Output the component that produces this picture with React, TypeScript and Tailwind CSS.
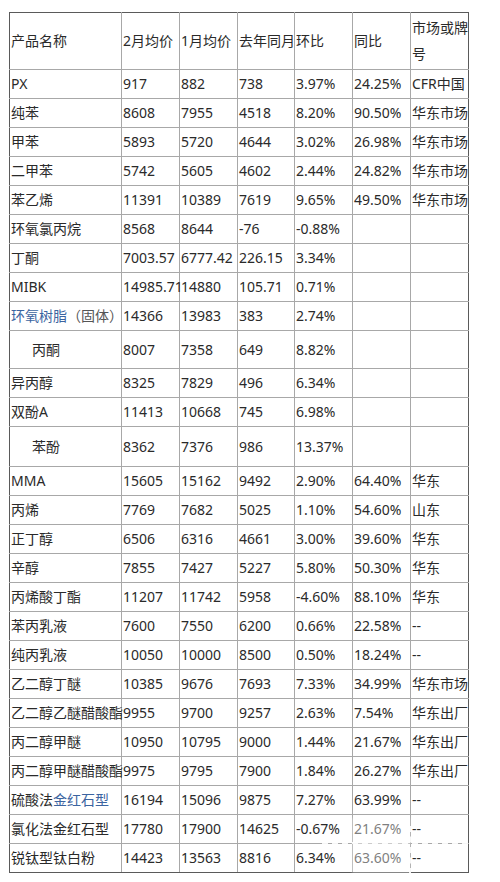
import React from 'react';

type Row = {
  name: React.ReactNode;
  feb: string;
  jan: string;
  last: string;
  mom: string;
  yoy?: string;
  market?: string;
  indent?: boolean;
  h?: string;
};

const blue = 'text-[#3b64a0]';

const rows: Row[] = [
  { name: 'PX', feb: '917', jan: '882', last: '738', mom: '3.97%', yoy: '24.25%', market: 'CFR中国' },
  { name: '纯苯', feb: '8608', jan: '7955', last: '4518', mom: '8.20%', yoy: '90.50%', market: '华东市场' },
  { name: '甲苯', feb: '5893', jan: '5720', last: '4644', mom: '3.02%', yoy: '26.98%', market: '华东市场' },
  { name: '二甲苯', feb: '5742', jan: '5605', last: '4602', mom: '2.44%', yoy: '24.82%', market: '华东市场' },
  { name: '苯乙烯', feb: '11391', jan: '10389', last: '7619', mom: '9.65%', yoy: '49.50%', market: '华东市场' },
  { name: '环氧氯丙烷', feb: '8568', jan: '8644', last: '-76', mom: '-0.88%' },
  { name: '丁酮', feb: '7003.57', jan: '6777.42', last: '226.15', mom: '3.34%' },
  { name: 'MIBK', feb: '14985.71', jan: '14880', last: '105.71', mom: '0.71%' },
  {
    name: (
      <>
        <span className={blue}>环氧树脂</span>
        <span className="text-[#555]">（固体）</span>
      </>
    ),
    feb: '14366', jan: '13983', last: '383', mom: '2.74%',
  },
  { name: '丙酮', feb: '8007', jan: '7358', last: '649', mom: '8.82%', indent: true, h: 'h-[38px]' },
  { name: '异丙醇', feb: '8325', jan: '7829', last: '496', mom: '6.34%' },
  { name: '双酚A', feb: '11413', jan: '10668', last: '745', mom: '6.98%' },
  { name: '苯酚', feb: '8362', jan: '7376', last: '986', mom: '13.37%', indent: true, h: 'h-[40px]' },
  { name: 'MMA', feb: '15605', jan: '15162', last: '9492', mom: '2.90%', yoy: '64.40%', market: '华东' },
  { name: '丙烯', feb: '7769', jan: '7682', last: '5025', mom: '1.10%', yoy: '54.60%', market: '山东' },
  { name: '正丁醇', feb: '6506', jan: '6316', last: '4661', mom: '3.00%', yoy: '39.60%', market: '华东' },
  { name: '辛醇', feb: '7855', jan: '7427', last: '5227', mom: '5.80%', yoy: '50.30%', market: '华东' },
  { name: '丙烯酸丁酯', feb: '11207', jan: '11742', last: '5958', mom: '-4.60%', yoy: '88.10%', market: '华东' },
  { name: '苯丙乳液', feb: '7600', jan: '7550', last: '6200', mom: '0.66%', yoy: '22.58%', market: '--' },
  { name: '纯丙乳液', feb: '10050', jan: '10000', last: '8500', mom: '0.50%', yoy: '18.24%', market: '--' },
  { name: '乙二醇丁醚', feb: '10385', jan: '9676', last: '7693', mom: '7.33%', yoy: '34.99%', market: '华东市场' },
  { name: '乙二醇乙醚醋酸酯', feb: '9955', jan: '9700', last: '9257', mom: '2.63%', yoy: '7.54%', market: '华东出厂' },
  { name: '丙二醇甲醚', feb: '10950', jan: '10795', last: '9000', mom: '1.44%', yoy: '21.67%', market: '华东出厂' },
  { name: '丙二醇甲醚醋酸酯', feb: '9975', jan: '9795', last: '7900', mom: '1.84%', yoy: '26.27%', market: '华东出厂' },
  {
    name: (
      <>
        硫酸法<span className={blue}>金红石型</span>
      </>
    ),
    feb: '16194', jan: '15096', last: '9875', mom: '7.27%', yoy: '63.99%', market: '--',
  },
  { name: '氯化法金红石型', feb: '17780', jan: '17900', last: '14625', mom: '-0.67%', yoy: '21.67%', market: '--' },
  { name: '锐钛型钛白粉', feb: '14423', jan: '13563', last: '8816', mom: '6.34%', yoy: '63.60%', market: '--' },
];

const cell =
  'border border-[#a8a8a8] px-[1px] align-middle whitespace-nowrap overflow-visible first:border-l-[#5a5a5a] last:border-r-[#5a5a5a]';

export default function App() {
  return (
    <div
      className="relative w-[500px] h-[882px] bg-white text-[14px] leading-[26px] text-[#2a2a2a]"
      style={{ fontFamily: '"Noto Sans", "Noto Sans CJK SC", sans-serif' }}
    >
      <div className="pt-[12px] pl-[9px]">
        <table className="table-fixed border-collapse w-[459px]">
          <colgroup>
            <col className="w-[112px]" />
            <col className="w-[58px]" />
            <col className="w-[58px]" />
            <col className="w-[57px]" />
            <col className="w-[58px]" />
            <col className="w-[58px]" />
            <col className="w-[58px]" />
          </colgroup>
          <tbody>
            <tr className="h-[57px]">
              {['产品名称', '2月均价', '1月均价', '去年同月', '环比', '同比'].map((t) => (
                <td key={t} className={`${cell} border-t-[#5a5a5a]`}>
                  {t}
                </td>
              ))}
              <td className="border border-[#a8a8a8] border-t-[#5a5a5a] border-r-[#5a5a5a] pl-[1px] pr-0 align-middle break-all">
                <div className="w-[57px]">市场或牌号</div>
              </td>
            </tr>
            {rows.map((r, i) => {
              const lastRow = i === rows.length - 1 ? 'border-b-[#5a5a5a]' : '';
              return (
                <tr key={i} className={r.h ?? 'h-[29px]'}>
                  <td className={`${cell} ${lastRow} ${r.indent ? 'pl-[22px]' : ''}`}>{r.name}</td>
                  <td className={`${cell} ${lastRow}`}>{r.feb}</td>
                  <td className={`${cell} ${lastRow}`}>{r.jan}</td>
                  <td className={`${cell} ${lastRow}`}>{r.last}</td>
                  <td className={`${cell} ${lastRow}`}>{r.mom}</td>
                  <td className={`${cell} ${lastRow}`}>{r.yoy ?? ''}</td>
                  <td className={`${cell} ${lastRow}`}>{r.market ?? ''}</td>
                </tr>
              );
            })}
          </tbody>
        </table>
      </div>

      {/* watermark over the bottom-right corner */}
      <div className="absolute left-[352px] top-[818px] w-[58px] h-[55px] bg-white/40 blur-[1px]" />
      <div className="absolute left-[322px] top-[842px] w-[146px] border-t-2 border-dashed border-white/90" />
      <div className="absolute left-[409px] top-[826px] h-[48px] border-l-2 border-dashed border-white/90" />
    </div>
  );
}
